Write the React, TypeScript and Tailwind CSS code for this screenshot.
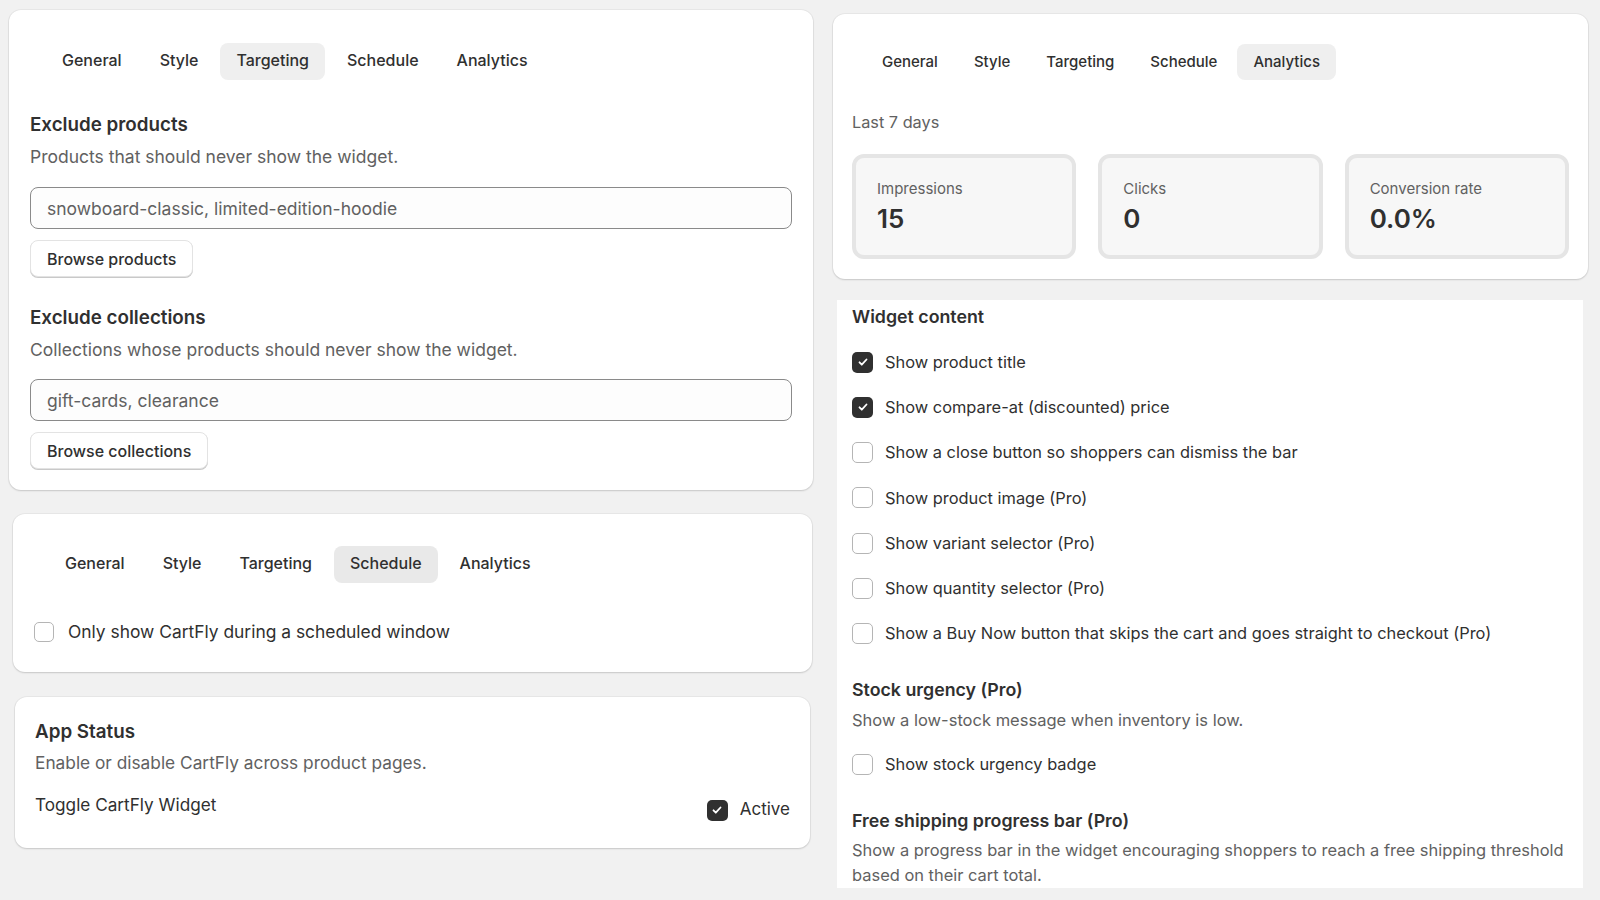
import React from "react";

const tabs = ["General", "Style", "Targeting", "Schedule", "Analytics"];

function Tabs({ active, size = "md", activeBg = "bg-[#efefef]" }: { active: string; size?: "md" | "sm"; activeBg?: string }) {
  return (
    <div className={`flex items-center ${size === "md" ? "gap-[6px]" : "gap-1"}`}>
      {tabs.map((t) => (
        <div
          key={t}
          className={`flex items-center px-4 rounded-lg font-medium text-[#303030] ${
            size === "md" ? "h-[37px] text-[16px] pb-[3px]" : "h-9 text-[15px]"
          } ${t === active ? activeBg : ""}`}
        >
          {t}
        </div>
      ))}
    </div>
  );
}

function Checkbox({ checked = false, size = 20 }: { checked?: boolean; size?: number }) {
  return (
    <div
      className={`shrink-0 rounded-[5px] flex items-center justify-center ${
        checked ? "bg-[#303030]" : "bg-white border border-[#b5b5b5]"
      }`}
      style={{ width: size, height: size }}
    >
      {checked && (
        <svg width="12" height="12" viewBox="0 0 12 12" fill="none">
          <path d="M2.5 6.3l2.3 2.4 4.7-5.2" stroke="white" strokeWidth="1.8" strokeLinecap="round" strokeLinejoin="round" />
        </svg>
      )}
    </div>
  );
}

function Card({ className = "", children }: { className?: string; children: React.ReactNode }) {
  return (
    <div className={`bg-white rounded-xl shadow-[0_1px_2px_rgba(0,0,0,0.14),0_0_0_1px_rgba(0,0,0,0.04)] ${className}`}>
      {children}
    </div>
  );
}

function TextField({ value }: { value: string }) {
  return (
    <input
      readOnly
      placeholder={value}
      className="w-full h-[42px] rounded-lg border border-[#8a8a8a] bg-[#fdfdfd] px-4 text-[17.5px] text-[#303030] placeholder:text-[#616161] outline-none"
    />
  );
}

function Button({ children }: { children: React.ReactNode }) {
  return (
    <button className="h-[37px] px-4 rounded-lg bg-white border border-[#e3e3e3] shadow-[0_1px_0_#c9c9c9] text-[16px] font-medium text-[#303030]">
      {children}
    </button>
  );
}

const stats = [
  { label: "Impressions", value: "15" },
  { label: "Clicks", value: "0" },
  { label: "Conversion rate", value: "0.0%" },
];

const contentOptions = [
  { label: "Show product title", checked: true },
  { label: "Show compare-at (discounted) price", checked: true },
  { label: "Show a close button so shoppers can dismiss the bar", checked: false },
  { label: "Show product image (Pro)", checked: false },
  { label: "Show variant selector (Pro)", checked: false },
  { label: "Show quantity selector (Pro)", checked: false },
  { label: "Show a Buy Now button that skips the cart and goes straight to checkout (Pro)", checked: false },
];

export default function App() {
  return (
    <div className="w-[1600px] h-[900px] overflow-hidden bg-[#f1f1f1] flex font-['Inter','Noto_Sans',sans-serif] text-[#303030]">
      {/* left column */}
      <div className="flex flex-col w-[813px] pt-[10px]">
        <Card className="ml-[9px] w-[804px] px-[21px] pt-[33px] pb-[21px]">
          <div className="pl-4">
            <Tabs active="Targeting" />
          </div>
          <h2 className="mt-[33px] text-[18.8px] leading-6 font-semibold">Exclude products</h2>
          <p className="mt-2 text-[17.5px] leading-6 text-[#616161]">Products that should never show the widget.</p>
          <div className="mt-[18px]">
            <TextField value="snowboard-classic, limited-edition-hoodie" />
          </div>
          <div className="mt-[11px]">
            <Button>Browse products</Button>
          </div>
          <h2 className="mt-[29px] text-[18.8px] leading-6 font-semibold">Exclude collections</h2>
          <p className="mt-2 text-[17.5px] leading-6 text-[#616161]">Collections whose products should never show the widget.</p>
          <div className="mt-[17px]">
            <TextField value="gift-cards, clearance" />
          </div>
          <div className="mt-[11px]">
            <Button>Browse collections</Button>
          </div>
        </Card>

        <Card className="ml-[13px] w-[799px] mt-6 pl-[21px] pr-5 pt-8 pb-[28px]">
          <div className="pl-[15px]">
            <Tabs active="Schedule" activeBg="bg-[#e9e9e9]" />
          </div>
          <label className="mt-[37px] flex items-center gap-[14px] h-6">
            <Checkbox />
            <span className="text-[17.4px] text-[#303030]">Only show CartFly during a scheduled window</span>
          </label>
        </Card>

        <Card className="ml-[15px] w-[795px] mt-[25px] px-5 pt-[23px] pb-[27px]">
          <h2 className="text-[18.8px] leading-6 font-semibold">App Status</h2>
          <p className="mt-[7px] text-[17.3px] leading-6 text-[#616161]">Enable or disable CartFly across product pages.</p>
          <div className="mt-[18px] flex items-start justify-between">
            <span className="text-[17.2px] leading-6">Toggle CartFly Widget</span>
            <div className="mt-[6px] flex items-center gap-3 h-[22px]">
              <Checkbox checked size={21} />
              <span className="text-[17px]">Active</span>
            </div>
          </div>
        </Card>
      </div>

      {/* right column */}
      <div className="flex flex-col ml-5 w-[755px] pt-[14px]">
        <Card className="w-[755px] px-[19px] pt-[30px] pb-5">
          <div className="pl-[14px]">
            <Tabs active="Analytics" size="sm" />
          </div>
          <p className="mt-[30px] text-[16.3px] leading-6 text-[#616161]">Last 7 days</p>
          <div className="mt-5 grid grid-cols-3 gap-[22px]">
            {stats.map((s) => (
              <div key={s.label} className="h-[105px] rounded-xl border-4 border-[#e5e5e5] bg-[#f7f7f7] px-[21px] pt-[21px]">
                <div className="text-[15px] leading-5 text-[#616161]">{s.label}</div>
                <div className="mt-1 text-[26px] leading-8 font-semibold text-[#303030]">{s.value}</div>
              </div>
            ))}
          </div>
        </Card>

        <div className="ml-1 w-[746px] mt-[21px] h-[588px] overflow-hidden bg-white pl-[15px] pr-[15px] pt-[5px]">
          <h3 className="text-[17.8px] leading-6 font-semibold">Widget content</h3>
          <div className="mt-[21px] flex flex-col gap-[21.3px]">
            {contentOptions.map((o) => (
              <label key={o.label} className="flex items-center gap-3 h-6">
                <Checkbox checked={o.checked} size={21} />
                <span className="text-[16.4px] text-[#303030]">{o.label}</span>
              </label>
            ))}
          </div>
          <h3 className="mt-8 text-[17.8px] leading-6 font-semibold">Stock urgency (Pro)</h3>
          <p className="mt-[6px] text-[16.5px] leading-6 text-[#616161]">Show a low-stock message when inventory is low.</p>
          <label className="mt-[21px] flex items-center gap-3 h-6">
            <Checkbox size={21} />
            <span className="text-[16.4px]">Show stock urgency badge</span>
          </label>
          <h3 className="mt-8 text-[17.8px] leading-6 font-semibold">Free shipping progress bar (Pro)</h3>
          <p className="mt-[5px] text-[16.45px] leading-[25px] text-[#616161]">
            Show a progress bar in the widget encouraging shoppers to reach a free shipping threshold based on their cart total.
          </p>
        </div>
      </div>
    </div>
  );
}
